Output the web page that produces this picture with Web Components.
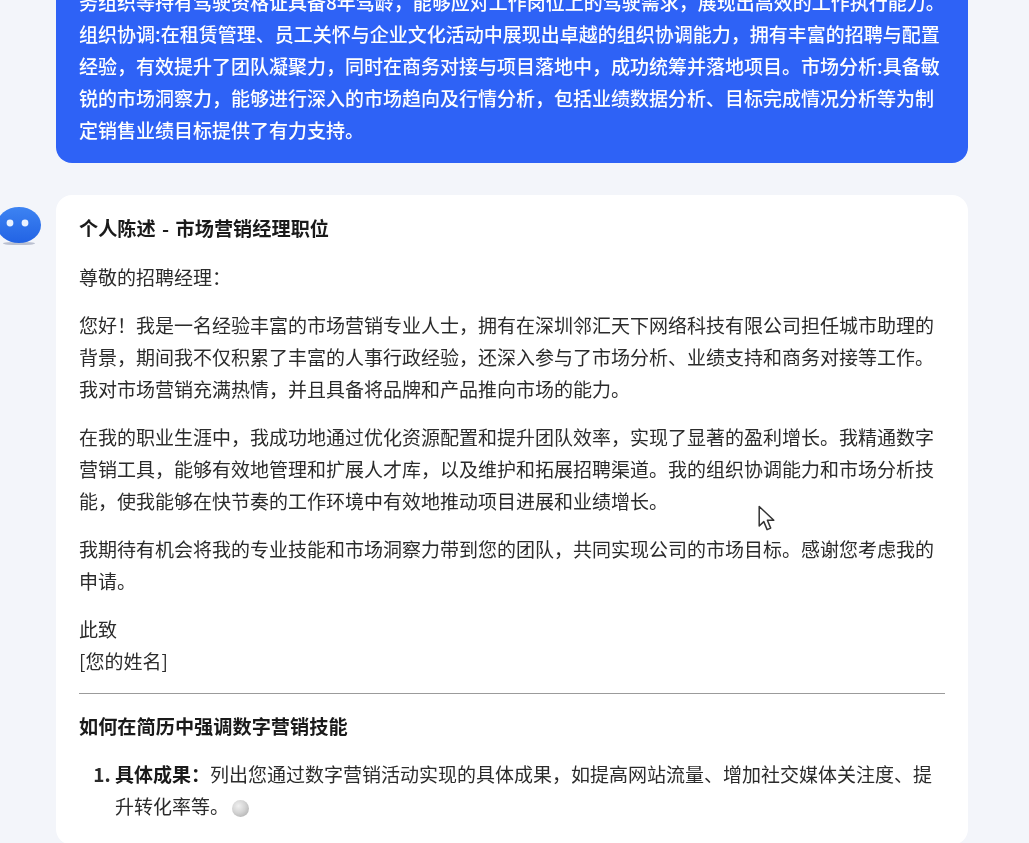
<!DOCTYPE html>
<html lang="zh">
<head>
<meta charset="utf-8">
<title>chat</title>
<style>
  html, body { margin: 0; height: 100%; overflow: hidden; background: #f3f5fa; }
</style>
</head>
<body>
<chat-page>
  <chat-row>
    <chat-bubble variant="user">务组织等持有驾驶资格证具备8年驾龄，能够应对工作岗位上的驾驶需求，展现出高效的工作执行能力。组织协调:在租赁管理、员工关怀与企业文化活动中展现出卓越的组织协调能力，拥有丰富的招聘与配置经验，有效提升了团队凝聚力，同时在商务对接与项目落地中，成功统筹并落地项目。市场分析:具备敏锐的市场洞察力，能够进行深入的市场趋向及行情分析，包括业绩数据分析、目标完成情况分析等为制定销售业绩目标提供了有力支持。</chat-bubble>
  </chat-row>
  <chat-row>
    <bot-avatar slot="avatar"></bot-avatar>
    <chat-bubble>
      <h4 class="first">个人陈述 - 市场营销经理职位</h4>
      <p>尊敬的招聘经理：</p>
      <p>您好！我是一名经验丰富的市场营销专业人士，拥有在深圳邻汇天下网络科技有限公司担任城市助理的背景，期间我不仅积累了丰富的人事行政经验，还深入参与了市场分析、业绩支持和商务对接等工作。我对市场营销充满热情，并且具备将品牌和产品推向市场的能力。</p>
      <p>在我的职业生涯中，我成功地通过优化资源配置和提升团队效率，实现了显著的盈利增长。我精通数字营销工具，能够有效地管理和扩展人才库，以及维护和拓展招聘渠道。我的组织协调能力和市场分析技能，使我能够在快节奏的工作环境中有效地推动项目进展和业绩增长。</p>
      <p>我期待有机会将我的专业技能和市场洞察力带到您的团队，共同实现公司的市场目标。感谢您考虑我的申请。</p>
      <p>此致<br>[您的姓名]</p>
      <hr>
      <h4>如何在简历中强调数字营销技能</h4>
      <ol>
        <li><strong>具体成果：</strong>列出您通过数字营销活动实现的具体成果，如提高网站流量、增加社交媒体关注度、提升转化率等。<typing-dot></typing-dot></li>
      </ol>
    </chat-bubble>
  </chat-row>
</chat-page>
<mouse-cursor></mouse-cursor>

<script>
class ChatPage extends HTMLElement {
  constructor() {
    super();
    this.attachShadow({ mode: 'open' });
    this.shadowRoot.innerHTML = `
      <style>
        :host {
          display: flex;
          flex-direction: column;
          gap: 32px;
          margin-top: -30px;
          padding-right: 61px;
          font-family: "Noto Sans CJK SC", "Liberation Sans", sans-serif;
          font-size: 19px;
          line-height: 32px;
          color: #2b2b2b;
          filter: blur(0.35px);
        }
      </style>
      <slot></slot>
    `;
  }
}

class ChatRow extends HTMLElement {
  constructor() {
    super();
    this.attachShadow({ mode: 'open' });
    this.shadowRoot.innerHTML = `
      <style>
        :host { display: flex; align-items: flex-start; padding-left: 56px; }
        .avatar { display: block; width: 0; }
      </style>
      <div class="avatar"><slot name="avatar"></slot></div>
      <slot></slot>
    `;
  }
}

class ChatBubble extends HTMLElement {
  constructor() {
    super();
    this.attachShadow({ mode: 'open' });
    this.shadowRoot.innerHTML = `
      <style>
        :host {
          display: block;
          flex: 1;
          min-width: 0;
          box-sizing: border-box;
          padding: 17px 23px 23px;
          border-radius: 16px;
          background: #fff;
        }
        :host([variant="user"]) {
          padding: 16px 23px 17px;
          background: #2e62f6;
          color: #fff;
          font-weight: 500;
        }
      </style>
      <slot></slot>
    `;
  }
}

class BotAvatar extends HTMLElement {
  constructor() {
    super();
    this.attachShadow({ mode: 'open' });
    this.shadowRoot.innerHTML = `
      <style>
        :host { display: block; width: 46px; height: 42px; margin: 11px 0 0 -59px; }
        svg { display: block; }
      </style>
      <svg width="46" height="42" viewBox="0 0 46 42">
        <defs>
          <linearGradient id="body" x1="0" y1="0" x2="0" y2="1">
            <stop offset="0" stop-color="#3d83f2"/>
            <stop offset="1" stop-color="#2263e4"/>
          </linearGradient>
        </defs>
        <ellipse cx="22" cy="37.5" rx="16" ry="1.6" fill="#8a94ad" opacity=".55"/>
        <ellipse cx="22" cy="19" rx="22" ry="18" fill="url(#body)"/>
        <circle cx="13" cy="17" r="3.4" fill="#eaf2ff"/>
        <circle cx="28" cy="17" r="3.4" fill="#eaf2ff"/>
      </svg>
    `;
  }
}

class TypingDot extends HTMLElement {
  constructor() {
    super();
    this.attachShadow({ mode: 'open' });
    this.shadowRoot.innerHTML = `
      <style>
        :host {
          display: inline-block;
          width: 17px;
          height: 17px;
          margin-left: 3px;
          vertical-align: -3px;
          border-radius: 50%;
          background: radial-gradient(circle at 38% 35%, #f0f0f0 0, #d4d4d4 45%, #a4a4a4 100%);
        }
      </style>
    `;
  }
}

class MouseCursor extends HTMLElement {
  constructor() {
    super();
    this.attachShadow({ mode: 'open' });
    this.shadowRoot.innerHTML = `
      <style>
        :host { position: fixed; left: 758px; top: 505px; width: 20px; height: 28px; }
        svg { display: block; }
      </style>
      <svg width="20" height="28" viewBox="0 0 20 28">
        <path d="M1.2 1.5V21l4.6-4.4 3.3 8 3.6-1.5-3.3-7.8h6.4z" fill="#fff" stroke="#333" stroke-width="1.5" stroke-linejoin="round"/>
      </svg>
    `;
  }
}

customElements.define('chat-page', ChatPage);
customElements.define('chat-row', ChatRow);
customElements.define('chat-bubble', ChatBubble);
customElements.define('bot-avatar', BotAvatar);
customElements.define('typing-dot', TypingDot);
customElements.define('mouse-cursor', MouseCursor);
</script>
<style>
  chat-bubble h4 { margin: 0 0 16px; font-size: 19.2px; font-weight: 700; color: #1a1a1a; word-spacing: 2px; }
  chat-bubble h4.first { margin-bottom: 17px; }
  chat-bubble p { margin: 0 0 16px; }
  chat-bubble hr { height: 0; margin: 15px 0 16px; border: 0; border-top: 1.5px solid #9b9b9b; }
  chat-bubble ol { margin: 0; padding-left: 36px; }
  chat-bubble li::marker { font-weight: 700; }
  chat-bubble strong { font-weight: 700; color: #1a1a1a; }
</style>
</body>
</html>
